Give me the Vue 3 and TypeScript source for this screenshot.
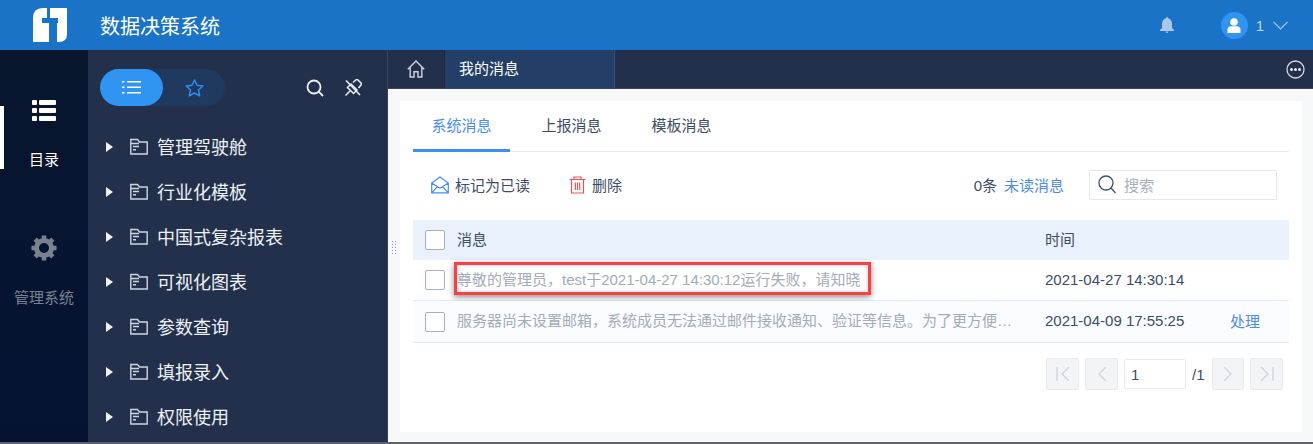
<script setup lang="ts">
const folders: string[] = ['管理驾驶舱', '行业化模板', '中国式复杂报表', '可视化图表', '参数查询', '填报录入', '权限使用']
const tabs: string[] = ['系统消息', '上报消息', '模板消息']
</script>

<template>
  <div class="page">
    <header class="topbar">
      <svg class="logo" width="34" height="34" viewBox="0 0 34 34">
        <path fill="#fff" d="M10 0H14V10H9V15H16V34H0V10Q0 0 10 0ZM17 0H34V26Q34 34 26 34H24V15H25V10H17Z" />
      </svg>
      <div class="product">数据决策系统</div>
      <div class="spacer"></div>
      <svg class="bell" width="14" height="16" viewBox="0 0 14 16">
        <path fill="#a9c9e8" d="M7 0Q8 0 8 1.200Q12 2.200 12 7V11L14 13V14H0V13L2 11V7Q2 2.200 6 1.200Q6 0 7 0ZM5.500 14.500H8.500Q8 16 7 16Q6 16 5.500 14.500Z" />
      </svg>
      <div class="avatar">
        <svg width="14" height="15" viewBox="0 0 14 15">
          <circle cx="7" cy="4" r="3.800" fill="#fff" />
          <path fill="#fff" d="M0.500 15V11.500Q0.500 8.500 4 8.200H10Q13.500 8.500 13.500 11.500V15Z" />
        </svg>
      </div>
      <span class="user">1</span>
      <svg class="chev" width="15" height="9" viewBox="0 0 15 9">
        <path fill="none" stroke="#a9c9e8" stroke-width="1.200" d="M0.500 0.800L7.500 7.800L14.500 0.800" />
      </svg>
    </header>

    <div class="body">
      <nav class="rail">
        <div class="rail-item active">
          <svg width="24" height="21" viewBox="0 0 24 21">
            <g fill="#fff">
              <rect x="0" y="0" width="5" height="5" rx="1" /><rect x="7" y="0" width="17" height="5" rx="1" />
              <rect x="0" y="8" width="5" height="5" rx="1" /><rect x="7" y="8" width="17" height="5" rx="1" />
              <rect x="0" y="16" width="5" height="5" rx="1" /><rect x="7" y="16" width="17" height="5" rx="1" />
            </g>
          </svg>
          <span>目录</span>
        </div>
        <div class="rail-item muted">
          <svg width="26" height="26" viewBox="0 0 26 26">
            <circle cx="13" cy="13" r="7.500" fill="none" stroke="#7a8292" stroke-width="5" />
            <g stroke="#7a8292" stroke-width="4.500">
              <path d="M13 0.500V5M13 21V25.500M0.500 13H5M21 13H25.500M4.200 4.200L7.300 7.300M18.700 18.700L21.800 21.800M21.800 4.200L18.700 7.300M7.300 18.700L4.200 21.800" />
            </g>
          </svg>
          <span>管理系统</span>
        </div>
      </nav>

      <aside class="side">
        <div class="side-tools">
          <div class="switch">
            <div class="switch-on">
              <svg width="19" height="15" viewBox="0 0 19 15">
                <g fill="#fff">
                  <rect x="0" y="1" width="2.500" height="1.500" /><rect x="5" y="1" width="14" height="1.500" />
                  <rect x="0" y="6.500" width="2.500" height="1.500" /><rect x="5" y="6.500" width="14" height="1.500" />
                  <rect x="0" y="12" width="2.500" height="1.500" /><rect x="5" y="12" width="14" height="1.500" />
                </g>
              </svg>
            </div>
            <div class="switch-off">
              <svg width="19" height="18" viewBox="0 0 19 18">
                <path fill="none" stroke="#2f8cf0" stroke-width="1.500" stroke-linejoin="round" d="M9.500 1L12 6.300L17.800 7L13.500 11L14.700 16.800L9.500 14L4.300 16.800L5.500 11L1.200 7L7 6.300Z" />
              </svg>
            </div>
          </div>
          <svg class="tool-search" width="18" height="18" viewBox="0 0 18 18">
            <circle cx="8" cy="8" r="6.500" fill="none" stroke="#eef2f6" stroke-width="1.800" />
            <path stroke="#eef2f6" stroke-width="1.800" d="M12.700 12.700L17 17" />
          </svg>
          <svg class="tool-pin" width="18" height="18" viewBox="0 0 18 18">
            <g fill="none" stroke="#eef2f6" stroke-width="1.500">
              <path d="M9 3.500L12 0.800Q13.200 0.300 14 1L17 4Q17.700 4.800 17 6L14.500 9" />
              <path d="M7 5L13 11L9.500 14.500L3.500 8.500Z" />
              <path d="M6 12L1.500 16.500M2 1.500L16 16" />
            </g>
          </svg>
        </div>
        <ul class="tree">
          <li v-for="f in folders" :key="f" class="tree-row">
            <span class="arrow"></span>
            <svg class="folder" width="18" height="17" viewBox="0 0 18 17">
              <path fill="none" stroke="#ced5de" stroke-width="1.400" d="M0.800 16V1.500H7.500L9.500 4H17.200V16Z M0.800 5.500H9" />
              <path stroke="#ced5de" stroke-width="1.400" d="M3 8.500H9M3 11.800H6" />
            </svg>
            <span class="tree-label">{{ f }}</span>
          </li>
        </ul>
      </aside>

      <main class="main">
        <div class="tabbar">
          <div class="home">
            <svg width="18" height="18" viewBox="0 0 18 18">
              <path fill="none" stroke="#cdd4de" stroke-width="1.400" d="M0.800 9.200L9 1L17.200 9.200M3.200 7.500V17H7V11.800H11V17H14.800V7.500" />
            </svg>
          </div>
          <div class="page-tab">我的消息</div>
          <div class="spacer"></div>
          <svg class="more" width="19" height="19" viewBox="0 0 19 19">
            <circle cx="9.500" cy="9.500" r="8.500" fill="none" stroke="#d5dae2" stroke-width="1.300" />
            <circle cx="5.500" cy="9.500" r="1.500" fill="#e8ecf1" /><circle cx="9.500" cy="9.500" r="1.500" fill="#e8ecf1" /><circle cx="13.500" cy="9.500" r="1.500" fill="#e8ecf1" />
          </svg>
        </div>
        <div class="content">
          <span class="grip"></span>
          <section class="panel">
            <div class="tabs">
              <div v-for="(t, i) in tabs" :key="t" class="tab" :class="{ on: i === 0 }">{{ t }}</div>
            </div>

            <div class="toolbar">
              <button class="action">
                <svg width="18" height="18" viewBox="0 0 18 18">
                  <path fill="none" stroke="#4a8cf5" stroke-width="1.200" d="M0.700 7L9 0.900L17.300 7V16.800H0.700Z M0.700 7L9 12.200L17.300 7 M0.700 16.800L6.500 10.600M17.300 16.800L11.500 10.600" />
                </svg>
                <span>标记为已读</span>
              </button>
              <button class="action del">
                <svg width="17" height="18" viewBox="0 0 17 18">
                  <path fill="none" stroke="#e9545c" stroke-width="1.200" d="M0.500 3.500H16.500M5 3.500V1H12V3.500M2.500 3.500V17H14.500V3.500M6.300 6.500V14M8.500 6.500V14M10.700 6.500V14" />
                </svg>
                <span>删除</span>
              </button>
              <div class="spacer"></div>
              <span class="count">0条</span>
              <a class="unread">未读消息</a>
              <div class="search">
                <svg width="18" height="19" viewBox="0 0 18 19">
                  <circle cx="8" cy="8" r="7" fill="none" stroke="#3f5170" stroke-width="1.300" />
                  <path stroke="#3f5170" stroke-width="1.300" d="M13 13L17.500 18" />
                </svg>
                <span>搜索</span>
              </div>
            </div>

            <div class="table">
              <div class="row head">
                <span class="check"></span>
                <span class="msg">消息</span>
                <span class="time">时间</span>
                <span class="op"></span>
              </div>
              <div class="row first">
                <span class="check"></span>
                <span class="msg read">尊敬的管理员，test于2021-04-27 14:30:12运行失败，请知晓</span>
                <span class="time">2021-04-27 14:30:14</span>
                <span class="op"></span>
                <span class="mark"></span>
              </div>
              <div class="row second">
                <span class="check"></span>
                <span class="msg read">服务器尚未设置邮箱，系统成员无法通过邮件接收通知、验证等信息。为了更方便…</span>
                <span class="time">2021-04-09 17:55:25</span>
                <a class="op">处理</a>
              </div>
            </div>

            <div class="pager">
              <span class="pg">
                <svg width="14" height="14" viewBox="0 0 14 14"><path fill="none" stroke="#ced4dc" stroke-width="1.300" d="M1 0V14M13 0L6 7L13 14" /></svg>
              </span>
              <span class="pg">
                <svg width="10" height="14" viewBox="0 0 10 14"><path fill="none" stroke="#ced4dc" stroke-width="1.300" d="M9 0L2 7L9 14" /></svg>
              </span>
              <span class="pg-input">1</span>
              <span class="pg-total">/1</span>
              <span class="pg next">
                <svg width="10" height="14" viewBox="0 0 10 14"><path fill="none" stroke="#ced4dc" stroke-width="1.300" d="M1 0L8 7L1 14" /></svg>
              </span>
              <span class="pg">
                <svg width="14" height="14" viewBox="0 0 14 14"><path fill="none" stroke="#ced4dc" stroke-width="1.300" d="M1 0L8 7L1 14M13 0V14" /></svg>
              </span>
            </div>
          </section>
        </div>
      </main>
    </div>
  </div>
</template>

<style>
html, body { margin: 0; background: #fff; }
</style>

<style scoped>
.page {
  width: 1313px;
  height: 444px;
  overflow: hidden;
  display: flex;
  flex-direction: column;
  font-family: "Liberation Sans", "Noto Sans CJK SC", sans-serif;
  font-size: 15px;
  color: #3d4d66;
}
.topbar {
  height: 50px;
  flex: none;
  background: #1a73c6;
  display: flex;
  align-items: center;
}
.logo { margin-left: 33px; flex: none; }
.product { margin-left: 33px; font-size: 20px; color: #fff; }
.bell { flex: none; }
.avatar {
  margin-left: 47px;
  width: 27px;
  height: 27px;
  border-radius: 50%;
  background: #2f94f2;
  display: flex;
  align-items: center;
  justify-content: center;
  flex: none;
}
.user { margin-left: 8px; color: #bcd6ee; font-size: 15px; }
.chev { margin-left: 9px; margin-right: 25px; flex: none; }
.body { flex: 1; display: flex; min-height: 0; border-bottom: 2px solid #5f6368; }
.rail {
  width: 88px;
  flex: none;
  background: linear-gradient(#09162e, #051232);
  display: flex;
  flex-direction: column;
  padding-top: 50px;
  box-sizing: border-box;
}
.rail-item {
  height: 68px;
  display: flex;
  flex-direction: column;
  align-items: center;
  justify-content: space-between;
  color: #fff;
  position: relative;
  font-size: 15px;
  line-height: 16px;
  flex: none;
}
.rail-item.active::before {
  content: "";
  position: absolute;
  left: 0;
  top: 6px;
  width: 4px;
  height: 63px;
  background: #fff;
}
.rail-item.muted { margin-top: 67px; color: #7a8292; height: 71px; }
.side {
  width: 299px;
  flex: none;
  background: #22304c;
  border-right: 1px solid #3a4558;
}
.side-tools { display: flex; align-items: center; height: 37px; margin-top: 19px; padding-left: 12px; }
.switch {
  width: 125px;
  height: 37px;
  border-radius: 19px;
  background: #20395f;
  display: flex;
  flex: none;
}
.switch-on {
  width: 63px;
  border-radius: 19px;
  background: #2f94f2;
  display: flex;
  align-items: center;
  justify-content: center;
}
.switch-off { flex: 1; display: flex; align-items: center; justify-content: center; }
.tool-search { margin-left: 81px; flex: none; }
.tool-pin { margin-left: 20px; flex: none; }
.tree { list-style: none; margin: 18px 0 0; padding: 0; }
.tree-row { height: 45px; display: flex; align-items: center; padding-left: 18px; color: #eef2f6; }
.arrow {
  width: 0;
  height: 0;
  border-left: 7px solid #eef2f6;
  border-top: 5.500px solid transparent;
  border-bottom: 5.500px solid transparent;
}
.folder { margin-left: 17px; flex: none; }
.tree-label { margin-left: 9px; font-size: 18px; margin-top: -2px; }
.main { flex: 1; min-width: 0; display: flex; flex-direction: column; }
.tabbar {
  height: 38px;
  flex: none;
  background: #22304c;
  border-bottom: 1px solid #3a4558;
  display: flex;
  align-items: center;
}
.home {
  width: 57px;
  height: 38px;
  display: flex;
  align-items: center;
  justify-content: center;
  box-sizing: border-box;
  border-right: 1px solid #1c2942;
}
.page-tab {
  width: 170px;
  height: 38px;
  box-sizing: border-box;
  background: #233f68;
  color: #fff;
  line-height: 37px;
  padding-left: 14px;
  border-right: 1px solid #35507a;
}
.spacer { flex: 1; }
.more { margin-right: 8px; flex: none; }
.content {
  flex: 1;
  min-height: 0;
  background: #f6f8fa;
  padding: 12px 11px 10px 12px;
  position: relative;
}
.grip {
  position: absolute;
  left: 3px;
  top: 151px;
  width: 7px;
  height: 15px;
  background-image: radial-gradient(circle, #8c95a3 0.800px, transparent 1px);
  background-size: 3px 3px;
}
.panel { background: #fff; height: 100%; padding: 0 13px; box-sizing: border-box; }
.tabs { display: flex; height: 50px; border-bottom: 1px solid #e8eaed; }
.tab { width: 97px; margin-right: 13px; text-align: center; line-height: 50px; box-sizing: border-box; height: 51px; }
.tab.on { color: #4a8cf5; border-bottom: 3px solid #3b8ef5; }
.toolbar { display: flex; align-items: center; height: 68px; padding-left: 18px; padding-bottom: 3px; box-sizing: border-box; }
.action {
  border: 0;
  background: none;
  padding: 0;
  margin: 0 39px 0 0;
  display: flex;
  align-items: center;
  gap: 6px;
  font: inherit;
  color: inherit;
}
.count { margin-right: 7px; }
.unread { color: #4a8cf5; margin-right: 25px; }
.search {
  width: 188px;
  height: 30px;
  box-sizing: border-box;
  border: 1px solid #e6e8ec;
  border-radius: 2px;
  display: flex;
  align-items: center;
  padding-left: 8px;
  gap: 8px;
  color: #a9afba;
  margin-right: 12px;
}
.table { display: flex; flex-direction: column; }
.row {
  display: grid;
  grid-template-columns: 32px 588px 185px 1fr;
  align-items: center;
  position: relative;
  padding-left: 12px;
}
.row.head { height: 40px; background: #e9f1fc; }
.row.first { height: 41px; border-bottom: 1px solid #e1eaf5; box-sizing: border-box; }
.row.second { height: 42px; background: #fafcff; border-bottom: 1px solid #e1eaf5; box-sizing: border-box; }
.check {
  width: 18px;
  height: 18px;
  border: 1px solid #a8afbc;
  border-radius: 2px;
  background: #fff;
  display: block;
}
.msg { white-space: nowrap; margin-bottom: 4px; }
.msg.read { color: #a5abb7; }
.time { margin-bottom: 2px; }
.head .time { margin-bottom: 4px; }
.op { color: #4a8cf5; margin-bottom: 2px; }
.mark {
  position: absolute;
  left: 41px;
  top: 2px;
  width: 417px;
  height: 33px;
  box-sizing: border-box;
  border: 3px solid #f94144;
  box-shadow: 0 2px 6px rgba(0, 0, 0, 0.45), inset 0 0 4px rgba(0, 0, 0, 0.2);
  pointer-events: none;
}
.pager {
  display: flex;
  align-items: center;
  justify-content: flex-end;
  margin-top: 15px;
  padding-right: 6px;
  gap: 6px;
}
.pg {
  width: 33px;
  height: 32px;
  box-sizing: border-box;
  background: #f2f4f7;
  border: 1px solid #e8eaee;
  border-radius: 2px;
  display: flex;
  align-items: center;
  justify-content: center;
}
.pg.next { width: 32px; }
.pg-input {
  width: 62px;
  height: 30px;
  box-sizing: border-box;
  border: 1px solid #e8eaee;
  border-radius: 2px;
  padding-left: 6px;
  line-height: 30px;
}
.pg-total { width: 14px; }
</style>
